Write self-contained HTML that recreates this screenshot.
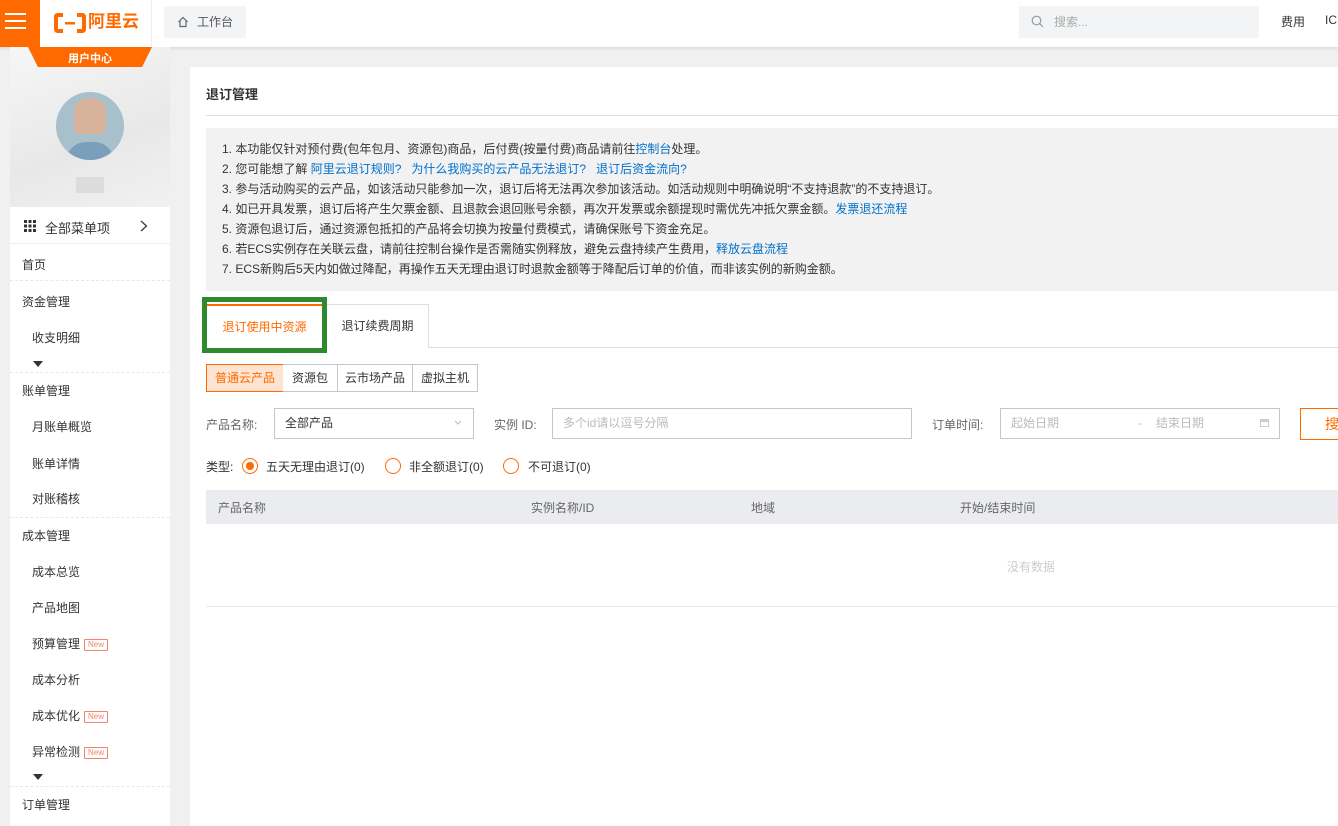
<!DOCTYPE html>
<html><head><meta charset="utf-8"><style>
*{margin:0;padding:0;box-sizing:border-box}
body{width:1338px;height:826px;overflow:hidden;background:#f0f0f0;font-family:"Liberation Sans","Noto Sans CJK SC",sans-serif;font-size:12px;color:#333;position:relative}
.a{position:absolute}
.hdr{left:0;top:0;width:1338px;height:47px;background:#fff;box-shadow:0 1px 4px rgba(0,0,0,.12)}
.side{left:10px;top:47px;width:160px;height:779px;background:#fff}
.mi{position:absolute;left:12px;font-size:12px;color:#333}
.sub{left:22px}
.dv{position:absolute;left:0;width:160px;border-top:1px dashed #e8e8e8}
.new{display:inline-block;border:1px solid #f3826c;color:#f3826c;font-size:8px;line-height:10px;padding:0 3px;margin-left:4px;vertical-align:1px;border-radius:1px}
.tri{position:absolute;left:23px;width:0;height:0;border-left:5px solid transparent;border-right:5px solid transparent;border-top:6px solid #333}
.main{left:190px;top:67px;width:1148px;height:759px;background:#fff}
.note div{height:20px;line-height:20px}
a{color:#0070cc;text-decoration:none}
.btn{position:absolute;top:364px;height:28px;line-height:26px;border:1px solid #c4c6cf;text-align:center;font-size:12px;background:#fff}
.inp{position:absolute;top:408px;height:31px;border:1px solid #c4c6cf;line-height:29px;padding-left:10px;font-size:12px}
.lbl{position:absolute;top:416px;color:#666}
.rad{position:absolute;top:458px;width:16px;height:16px;border:1px solid #ff6a00;border-radius:50%}
</style></head><body>
<div class="a hdr"></div>
<div class="a" style="left:0;top:0;width:40px;height:47px;background:#ff6a00"></div>
<div class="a" style="left:5px;top:13px;width:21px;height:2px;background:#fff"></div>
<div class="a" style="left:5px;top:20px;width:21px;height:2px;background:#fff"></div>
<div class="a" style="left:5px;top:27px;width:21px;height:2px;background:#fff"></div>
<svg class="a" style="left:54px;top:13px" width="32" height="20" viewBox="0 0 32 20"><path d="M9 2H4Q2 2 2 4V16Q2 18 4 18H9M23 2H28Q30 2 30 4V16Q30 18 28 18H23" fill="none" stroke="#ff6a00" stroke-width="4"/><rect x="11" y="9" width="10" height="2.5" fill="#ff6a00"/></svg>
<div class="a" style="left:88px;top:10px;font-size:17px;font-weight:bold;color:#ff6a00;line-height:24px">阿里云</div>
<div class="a" style="left:151px;top:0;width:1px;height:47px;background:#eee"></div>
<div class="a" style="left:164px;top:6px;width:82px;height:32px;background:#f3f4f6;border-radius:2px"></div>
<svg class="a" style="left:177px;top:16px" width="12" height="12" viewBox="0 0 12 12"><path d="M1.5 6L6 1.5 10.5 6M3 5V10.5H9V5" fill="none" stroke="#666" stroke-width="1.2"/></svg>
<div class="a" style="left:197px;top:13px;color:#555;font-size:12px">工作台</div>
<div class="a" style="left:1019px;top:6px;width:240px;height:32px;background:#f3f4f6"></div>
<svg class="a" style="left:1031px;top:15px" width="13" height="13" viewBox="0 0 13 13"><circle cx="5.5" cy="5.5" r="4.3" fill="none" stroke="#999" stroke-width="1.2"/><path d="M8.7 8.7L12 12" stroke="#999" stroke-width="1.2"/></svg>
<div class="a" style="left:1054px;top:13px;color:#aaa">搜索...</div>
<div class="a" style="left:1281px;top:13px;color:#333">费用</div>
<div class="a" style="left:1325px;top:13px;color:#333">IC</div>

<div class="a side">
<div class="a" style="left:0;top:0;width:160px;height:160px;background:linear-gradient(160deg,#f6f6f6,#e8e8e8 60%,#f1f1f1)"></div>
<div class="a" style="left:18px;top:0;width:124px;height:20px;background:#ff6a00;clip-path:polygon(0 0,100% 0,92% 100%,8% 100%)"></div>
<div class="a" style="left:0;top:3px;width:160px;text-align:center;color:#fff;font-size:11px;font-weight:bold">用户中心</div>
<div class="a" style="left:46px;top:45px;width:68px;height:68px;border-radius:50%;background:#a8c0cc;overflow:hidden">
<div class="a" style="left:18px;top:6px;width:32px;height:36px;border-radius:14px 14px 6px 6px;background:#d6b39a"></div>
<div class="a" style="left:10px;top:50px;width:48px;height:30px;border-radius:20px 20px 0 0;background:#7a9fba"></div></div>
<div class="a" style="left:66px;top:130px;width:28px;height:16px;background:#dcdcdc"></div>
<svg class="a" style="left:14px;top:173px" width="12" height="12"><g fill="#333"><rect x="0" y="0" width="3" height="3"/><rect x="4.5" y="0" width="3" height="3"/><rect x="9" y="0" width="3" height="3"/><rect x="0" y="4.5" width="3" height="3"/><rect x="4.5" y="4.5" width="3" height="3"/><rect x="9" y="4.5" width="3" height="3"/><rect x="0" y="9" width="3" height="3"/><rect x="4.5" y="9" width="3" height="3"/><rect x="9" y="9" width="3" height="3"/></g></svg>
<div class="mi" style="left:35px;top:171px;font-size:13px">全部菜单项</div>
<svg class="a" style="left:130px;top:173px" width="8" height="12"><path d="M1 1L6.5 6 1 11" fill="none" stroke="#333" stroke-width="1.2"/></svg>
<div class="dv" style="top:196px;border-top:1px solid #eee"></div>
<div class="mi" style="top:209px">首页</div>
<div class="dv" style="top:233px"></div>
<div class="mi" style="top:246px">资金管理</div>
<div class="mi sub" style="top:282px">收支明细</div>
<div class="tri" style="top:314px"></div>
<div class="dv" style="top:325px"></div>
<div class="mi" style="top:335px">账单管理</div>
<div class="mi sub" style="top:371px">月账单概览</div>
<div class="mi sub" style="top:408px">账单详情</div>
<div class="mi sub" style="top:443px">对账稽核</div>
<div class="dv" style="top:470px"></div>
<div class="mi" style="top:480px">成本管理</div>
<div class="mi sub" style="top:516px">成本总览</div>
<div class="mi sub" style="top:552px">产品地图</div>
<div class="mi sub" style="top:588px">预算管理<span class="new">New</span></div>
<div class="mi sub" style="top:624px">成本分析</div>
<div class="mi sub" style="top:660px">成本优化<span class="new">New</span></div>
<div class="mi sub" style="top:696px">异常检测<span class="new">New</span></div>
<div class="tri" style="top:727px"></div>
<div class="dv" style="top:739px"></div>
<div class="mi" style="top:749px">订单管理</div>
</div>

<div class="a main"></div>
<div class="a" style="left:206px;top:84px;font-size:13px;font-weight:bold;color:#333">退订管理</div>
<div class="a" style="left:206px;top:115px;width:1132px;height:1px;background:#ddd"></div>
<div class="a note" style="left:206px;top:128px;width:1132px;height:163px;background:#f2f2f2;padding:11px 0 0 16px;color:#333">
<div>1. 本功能仅针对预付费(包年包月、资源包)商品，后付费(按量付费)商品请前往<a>控制台</a>处理。</div>
<div>2. 您可能想了解 <a>阿里云退订规则?</a> &nbsp;&nbsp;<a>为什么我购买的云产品无法退订?</a> &nbsp;&nbsp;<a>退订后资金流向?</a></div>
<div>3. 参与活动购买的云产品，如该活动只能参加一次，退订后将无法再次参加该活动。如活动规则中明确说明“不支持退款”的不支持退订。</div>
<div>4. 如已开具发票，退订后将产生欠票金额、且退款会退回账号余额，再次开发票或余额提现时需优先冲抵欠票金额。<a>发票退还流程</a></div>
<div>5. 资源包退订后，通过资源包抵扣的产品将会切换为按量付费模式，请确保账号下资金充足。</div>
<div>6. 若ECS实例存在关联云盘，请前往控制台操作是否需随实例释放，避免云盘持续产生费用，<a>释放云盘流程</a></div>
<div>7. ECS新购后5天内如做过降配，再操作五天无理由退订时退款金额等于降配后订单的价值，而非该实例的新购金额。</div>
</div>
<div class="a" style="left:206px;top:347px;width:1132px;height:1px;background:#dcdee3"></div>
<div class="a" style="left:326px;top:304px;width:103px;height:44px;border:1px solid #dcdee3;border-bottom:none;background:#fff;text-align:center;line-height:42px;color:#333">退订续费周期</div>
<div class="a" style="left:202px;top:297px;width:125px;height:56px;border:5px solid #2f8a2f;background:#fff"></div>
<div class="a" style="left:207px;top:304px;width:115px;height:2px;background:#ff6a00"></div>
<div class="a" style="left:207px;top:318px;width:115px;text-align:center;color:#ff6a00">退订使用中资源</div>

<div class="btn" style="left:206px;width:78px;background:#fde3d2;border-color:#ff6a00;color:#ff6a00">普通云产品</div>
<div class="btn" style="left:283px;width:55px;border-left:none">资源包</div>
<div class="btn" style="left:337px;width:76px">云市场产品</div>
<div class="btn" style="left:412px;width:66px">虚拟主机</div>

<div class="lbl" style="left:206px">产品名称:</div>
<div class="inp" style="left:274px;width:200px;color:#333">全部产品</div>
<svg class="a" style="left:454px;top:420px" width="8" height="6"><path d="M1 1L4 4 7 1" fill="none" stroke="#bbb"/></svg>
<div class="lbl" style="left:494px">实例 ID:</div>
<div class="inp" style="left:552px;width:360px;color:#bbb">多个id请以逗号分隔</div>
<div class="lbl" style="left:932px">订单时间:</div>
<div class="inp" style="left:1000px;width:280px;color:#bbb">起始日期<span style="position:absolute;left:137px">-</span><span style="position:absolute;left:155px">结束日期</span></div>
<div class="a" style="left:1260px;top:419px;width:9px;height:8px;border:1.5px solid #ccc;border-top-width:3px"></div>
<div class="a" style="left:1300px;top:408px;width:60px;height:32px;border:1px solid #ff6a00;color:#ff6a00;font-size:14px;line-height:30px;padding-left:24px">搜</div>

<div class="a" style="left:206px;top:458px;color:#333">类型:</div>
<div class="rad" style="left:242px"></div><div class="a" style="left:246px;top:462px;width:8px;height:8px;border-radius:50%;background:#ff6a00"></div>
<div class="a" style="left:266px;top:458px">五天无理由退订(0)</div>
<div class="rad" style="left:385px"></div><div class="a" style="left:409px;top:458px">非全额退订(0)</div>
<div class="rad" style="left:503px"></div><div class="a" style="left:528px;top:458px">不可退订(0)</div>

<div class="a" style="left:206px;top:490px;width:1132px;height:34px;background:#ebecf0"></div>
<div class="a" style="left:218px;top:499px;color:#666">产品名称</div>
<div class="a" style="left:531px;top:499px;color:#666">实例名称/ID</div>
<div class="a" style="left:751px;top:499px;color:#666">地域</div>
<div class="a" style="left:960px;top:499px;color:#666">开始/结束时间</div>
<div class="a" style="left:1007px;top:558px;color:#ccc">没有数据</div>
<div class="a" style="left:206px;top:606px;width:1132px;height:1px;background:#e6e7eb"></div>
</body></html>
